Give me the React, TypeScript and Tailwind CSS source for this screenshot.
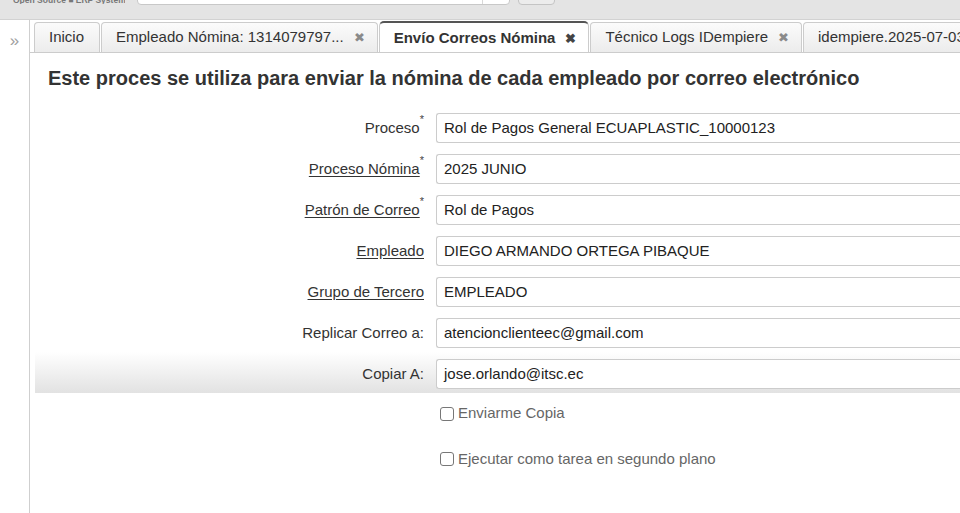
const tabs = [
  { label: 'Inicio', close: false, active: false },
  { label: 'Empleado Nómina: 1314079797...', close: true, active: false },
  { label: 'Envío Correos Nómina', close: true, active: true },
  { label: 'Técnico Logs IDempiere', close: true, active: false },
  { label: 'idempiere.2025-07-03', close: true, active: false },
];

const fields = [
  { label: 'Proceso', value: 'Rol de Pagos General ECUAPLASTIC_10000123', link: false, required: true },
  { label: 'Proceso Nómina', value: '2025 JUNIO', link: true, required: true },
  { label: 'Patrón de Correo', value: 'Rol de Pagos', link: true, required: true },
  { label: 'Empleado', value: 'DIEGO ARMANDO ORTEGA PIBAQUE', link: true, required: false },
  { label: 'Grupo de Tercero', value: 'EMPLEADO', link: true, required: false },
  { label: 'Replicar Correo a:', value: 'atencionclienteec@gmail.com', link: false, required: false },
  { label: 'Copiar A:', value: 'jose.orlando@itsc.ec', link: false, required: false, hover: true },
];

const App = () => {
  return (
    <div className="w-[960px] h-[513px] overflow-hidden bg-white flex flex-col font-['Liberation_Sans',Arial,sans-serif] text-[#333]">
      {/* header (mostly scrolled off) */}
      <div className="h-[20px] shrink-0 bg-[#e4e4e4] border-b border-[#d2d2d2] flex items-end overflow-hidden">
        <div className="ml-[13px] mb-[15px] w-[112px] shrink-0 overflow-hidden text-[8.5px] font-bold leading-none text-[#777] whitespace-nowrap">
          Open Source ■ ERP System
        </div>
        <div className="ml-[12px] mb-[14px] w-[373px] h-[24px] bg-white border border-[#c8c8c8] rounded-[4px] flex justify-end">
          <div className="w-[27px] border-l border-[#d8d8d8]" />
        </div>
        <div className="ml-[8px] mb-[14px] w-[37px] h-[24px] bg-[#ececec] border border-[#c4c4c4] rounded-[4px]" />
      </div>

      <div className="flex flex-1 min-h-0">
        {/* left collapsed panel */}
        <div className="w-[30px] shrink-0 border-r border-[#cfcfcf] bg-white flex justify-center pt-[12px]">
          <span className="text-[17px] leading-none text-[#a0a0a0]">»</span>
        </div>

        <div className="flex-1 min-w-0 flex flex-col">
          {/* tab strip */}
          <div className="h-[33px] shrink-0 flex items-end gap-[1px] pl-[4px] border-b border-[#cccccc] overflow-hidden">
            {tabs.map((t) =>
              t.active ? (
                <div
                  key={t.label}
                  className="h-[32px] -mb-[1px] shrink-0 flex items-center gap-[10px] pl-[14px] pr-[12px] bg-white border border-[#ccc] border-b-0 border-t-2 border-t-[#555] rounded-t-[5px] text-[15px] font-bold text-[#333] whitespace-nowrap"
                >
                  {t.label}
                  <span className="w-[11px] text-[13px] leading-none text-[#444] text-center">✖</span>
                </div>
              ) : (
                <div
                  key={t.label}
                  className={
                    'h-[30px] shrink-0 flex items-center gap-[10px] pl-[14px] bg-gradient-to-b from-[#fbfbfb] to-[#ececec] border border-[#cccccc] border-b-0 rounded-t-[4px] text-[15px] text-[#333] whitespace-nowrap ' +
                    (t.close ? 'pr-[12px]' : 'pr-[15px]')
                  }
                >
                  {t.label}
                  {t.close && <span className="w-[11px] text-[13px] leading-none text-[#8a8a8a] text-center">✖</span>}
                </div>
              )
            )}
          </div>

          {/* process dialog */}
          <div className="flex-1 pl-[5px]">
            <h1 className="pl-[13px] mt-[14px] text-[20px] leading-[22px] font-bold text-[#333] whitespace-nowrap">
              Este proces se utiliza para enviar la nómina de cada empleado por correo electrónico
            </h1>

            <div className="mt-[17px]">
              {fields.map((f) => (
                <div
                  key={f.label}
                  className={
                    'h-[41px] flex pt-[7px] ' +
                    (f.hover ? 'bg-gradient-to-b from-white to-[#e2e2e2]' : '')
                  }
                >
                  <div className="w-[389px] shrink-0 h-[30px] flex items-center justify-end text-[15px] text-[#333]">
                    <span className={f.link ? 'underline underline-offset-2' : ''}>{f.label}</span>
                    {f.required && <span className="self-start mt-[1px] text-[11px] leading-none text-[#444]">*</span>}
                  </div>
                  <div className="ml-[12px] flex-1 h-[30px] bg-white border border-r-0 border-[#cccccc] rounded-l-[3px] flex items-center pl-[7px] text-[15px] text-[#222] whitespace-nowrap">
                    {f.value}
                  </div>
                </div>
              ))}

              <div className="h-[41px] flex items-center pl-[405px] text-[15px] text-[#666]">
                <span className="w-[14px] h-[14px] border border-[#777] rounded-[3px] bg-white mr-[4px]" />
                Enviarme Copia
              </div>
              <div className="h-[50px] flex items-center pl-[405px] text-[15px] text-[#666]">
                <span className="w-[14px] h-[14px] border border-[#777] rounded-[3px] bg-white mr-[4px]" />
                Ejecutar como tarea en segundo plano
              </div>
            </div>
          </div>
        </div>
      </div>
    </div>
  );
};

export default App;
